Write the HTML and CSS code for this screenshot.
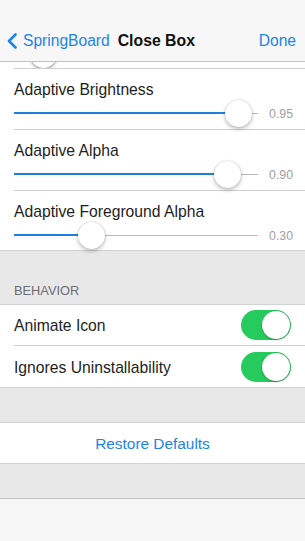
FILE: index.html
```html
<!DOCTYPE html>
<html lang="en">
<head>
<meta charset="utf-8">
<title>Close Box</title>
<link rel="stylesheet" href="styles.css">
</head>
<body>
<div class="screen">
  <header class="nav">
    <div class="back">
      <svg class="chevron" width="12" height="16" viewBox="0 0 12 16"><polyline points="9.5,1.5 3,8 9.5,14.5" fill="none" stroke="#1c84e6" stroke-width="2.6" stroke-linecap="round" stroke-linejoin="round"/></svg>
      <span>SpringBoard</span>
    </div>
    <div class="title">Close Box</div>
    <div class="done">Done</div>
  </header>

  <section class="group sliders">
    <div class="row peek"><div class="thumb peek-thumb"></div></div>
    <div class="row slider-row">
      <div class="label">Adaptive Brightness</div>
      <div class="slider">
        <div class="track" style="--v:0.95"><div class="fill"></div><div class="thumb"></div></div>
        <div class="value">0.95</div>
      </div>
    </div>
    <div class="row slider-row">
      <div class="label">Adaptive Alpha</div>
      <div class="slider">
        <div class="track" style="--v:0.90"><div class="fill"></div><div class="thumb"></div></div>
        <div class="value">0.90</div>
      </div>
    </div>
    <div class="row slider-row">
      <div class="label">Adaptive Foreground Alpha</div>
      <div class="slider">
        <div class="track" style="--v:0.30"><div class="fill"></div><div class="thumb"></div></div>
        <div class="value">0.30</div>
      </div>
    </div>
  </section>

  <div class="section-header">BEHAVIOR</div>
  <section class="group">
    <div class="row switch-row">
      <span class="label">Animate Icon</span>
      <div class="switch on"><div class="knob"></div></div>
    </div>
    <div class="row switch-row">
      <span class="label">Ignores Uninstallability</span>
      <div class="switch on"><div class="knob"></div></div>
    </div>
  </section>

  <div class="spacer"></div>
  <section class="group">
    <div class="row button-row">Restore Defaults</div>
  </section>
  <div class="spacer"></div>

  <footer class="toolbar"></footer>
</div>
</body>
</html>
```

FILE: styles.css
```css
* { box-sizing: border-box; }
html, body { margin: 0; padding: 0; }
body {
  width: 305px;
  height: 541px;
  overflow: hidden;
  background: #e8e8e9;
  font-family: "Liberation Sans", Arial, sans-serif;
  color: #1e1e1e;
}
.screen {
  width: 305px;
  height: 541px;
  display: flex;
  flex-direction: column;
  background: #e8e8e9;
}

/* nav bar */
.nav {
  height: 62px;
  padding-top: 20px;
  background: #f7f7f7;
  border-bottom: 1px solid #c2c2c4;
  display: flex;
  align-items: center;
  font-size: 15.6px;
}
.back {
  display: flex;
  align-items: center;
  color: #1c84e6;
  padding-left: 6px;
}
.chevron { margin-right: 5px; margin-top: 1px; }
.title {
  margin-left: 8px;
  font-weight: bold;
  font-size: 15.8px;
  color: #111;
}
.done {
  margin-left: auto;
  padding-right: 9px;
  color: #1c84e6;
}

/* groups */
.group {
  background: #fff;
  border-top: 1px solid #d2d2d4;
  border-bottom: 1px solid #d2d2d4;
}
.sliders { border-top: none; }
.row {
  margin-left: 14px;
  border-bottom: 1px solid #cfcfd2;
}
.row:last-child { border-bottom: none; }

.slider-row {
  height: 61px;
  padding-top: 11px;
  padding-right: 12px;
}
.slider-row:last-child { height: 59px; }
.label {
  font-size: 15.7px;
  line-height: 20px;
}
.slider {
  display: flex;
  align-items: center;
  height: 27px;
}
.track {
  position: relative;
  width: 244px;
  height: 27px;
  flex: none;
}
.track::before {
  content: "";
  position: absolute;
  left: 0;
  right: 0;
  top: 12.5px;
  height: 1.5px;
  background: #b9b9bb;
}
.fill {
  position: absolute;
  left: 0;
  top: 12px;
  height: 2px;
  width: calc(var(--v) * 227px + 9px);
  background: #1c7fe0;
}
.thumb {
  position: absolute;
  top: 0;
  left: calc(var(--v) * 227px - 4.5px);
  width: 27px;
  height: 27px;
  border-radius: 50%;
  background: #fff;
  box-shadow: 0 2px 4px rgba(0, 0, 0, 0.26), 0 0 0 0.5px rgba(0, 0, 0, 0.12);
}
.value {
  margin-left: auto;
  font-size: 12.3px;
  color: #a0a0a3;
}

/* partially scrolled-away slider under the nav bar */
.peek {
  height: 7px;
  overflow: hidden;
  position: relative;
}
.peek .peek-thumb {
  left: 16px;
  top: -21px;
  box-shadow: 0 2px 3px rgba(0, 0, 0, 0.3), 0 0 0 0.5px rgba(0, 0, 0, 0.15);
}

/* header */
.section-header {
  height: 53px;
  padding: 32px 0 0 14px;
  font-size: 12.8px;
  line-height: 16px;
  color: #6d6d72;
}

/* switches */
.switch-row {
  height: 41px;
  display: flex;
  align-items: center;
  justify-content: space-between;
  padding-right: 14px;
}
.switch-row:first-child { padding-bottom: 1px; }
.switch-row .label { padding-top: 2px; }
.switch {
  width: 50px;
  height: 30px;
  border-radius: 15px;
  background: #26cb5e;
  position: relative;
}
.knob {
  position: absolute;
  right: 1px;
  top: 1px;
  width: 28px;
  height: 28px;
  border-radius: 50%;
  background: #fff;
  box-shadow: 0 1px 2px rgba(0, 0, 0, 0.25), 0 0 0 0.5px rgba(0, 0, 0, 0.12);
}

.spacer { height: 34px; }

.button-row {
  margin-left: 0;
  height: 40px;
  padding-top: 1px;
  display: flex;
  align-items: center;
  justify-content: center;
  font-size: 15.4px;
  color: #1c84e6;
}

.toolbar {
  flex: 1;
  background: #f6f6f6;
  border-top: 1px solid #c4c4c6;
}
```
